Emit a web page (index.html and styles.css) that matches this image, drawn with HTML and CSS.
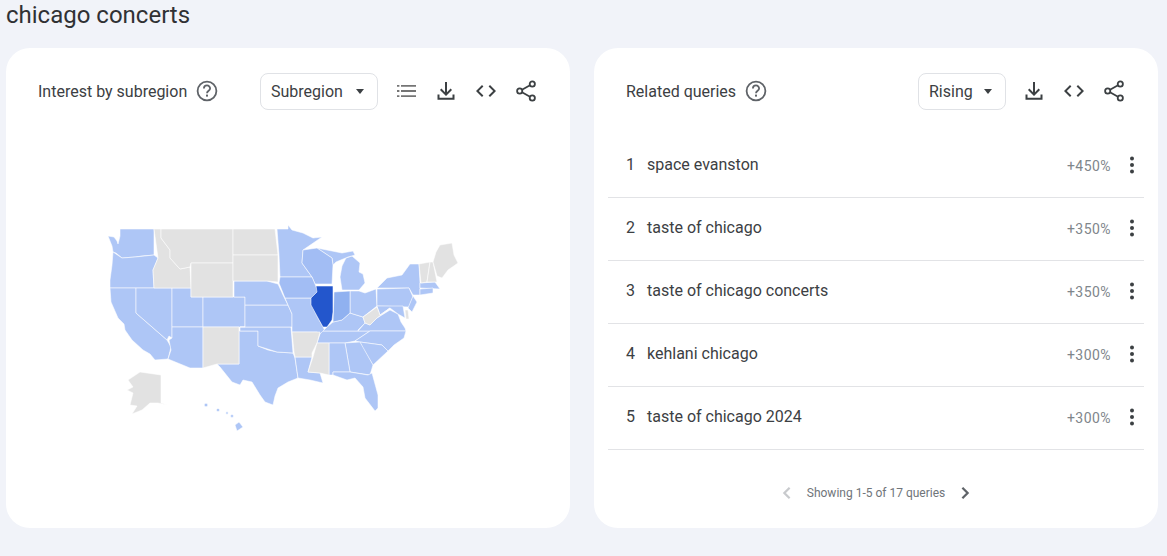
FILE: index.html
```html
<!DOCTYPE html>
<html lang="en">
<head>
  <meta charset="UTF-8">
  <title>chicago concerts</title>
  <link rel="stylesheet" href="styles.css">
</head>
<body>
  <h1 class="page-title">chicago concerts</h1>

  <div class="cards">
    <section class="card">
      <div class="card-header">
        <span class="card-title">Interest by subregion</span>
        <svg class="help" viewBox="0 0 24 24"><use href="#i-help"/></svg>
        <div class="dropdown dropdown-region">Subregion <span class="caret"></span></div>
        <div class="actions">
          <svg class="icon icon-list" viewBox="0 0 24 24"><path d="M3 6h2.4v1.8H3zM7 6h15v1.8H7zM3 11.1h2.4v1.8H3zM7 11.1h15v1.8H7zM3 16.2h2.4V18H3zM7 16.2h15V18H7z"/></svg>
          <svg class="icon" viewBox="0 0 24 24"><use href="#i-download"/></svg>
          <svg class="icon" viewBox="0 0 24 24"><use href="#i-code"/></svg>
          <svg class="icon" viewBox="0 0 24 24"><use href="#i-share"/></svg>
        </div>
      </div>

      <svg class="map" viewBox="100 220 370 220">
        <g class="st">
          <!-- west -->
          <polygon points="120,229 154,229 154,255 142,256 135,257 122,258 116,253 113,252 112,246 108,236 114,237 117,241 118,244 120,236"/>
          <polygon points="113,252 122,258 135,257 154,255 158,258 153,270 154,288 110,288 110,280 112,265"/>
          <polygon points="110,288 136,288 136,313 167,340 171,347 168,359 155,360 150,354 143,350 132,340 125,330 124,324 118,318 111,302"/>
          <polygon points="136,288 172,288 172,338 169,336 167,340 136,313"/>
          <polygon points="172,288 191,288 191,297 203,297 203,327 172,327"/>
          <polygon points="203,297 245,297 245,327 203,327"/>
          <polygon points="172,327 203,327 203,368 190,368 168,359 171,350 169,340 172,338"/>
          <!-- plains -->
          <polygon points="239,331 258,331 258,346 268,350 277,352 293,353 295,358 298,378 288,382 278,388 275,396 273,405 265,402 260,395 252,382 243,380 240,385 232,382 220,367 217,364 239,364"/>
          <polygon points="240,327 291,327 293,353 277,352 258,346 258,331 240,331"/>
          <polygon points="245,305 288,305 292,314 292,327 240,327 245,327"/>
          <polygon points="234,281 267,281 278,284 283,295 288,305 245,305 245,297 234,297"/>
          <polygon points="277,229 288,229 288,225 292,230 303,233 313,238 322,237 303,250 302,263 312,277 280,277 279,255"/>
          <polygon points="285,298 312,298 312,305 318,318 323,327 325,331 320,334 317,332 292,332 292,314 288,305"/>
          <!-- south east -->
          <polygon points="323,331 370,331 355,341 345,343 317,343 320,334"/>
          <polygon points="333,322 342,320 350,313 363,317 365,323 358,330 358,331 323,331 327,327"/>
          <polygon points="358,331 365,323 370,325 377,318 390,310 398,314 401,322 405,328 406,331"/>
          <polygon points="370,331 406,331 404,338 394,345 388,351 382,345 360,342 355,341"/>
          <polygon points="360,342 382,345 388,351 373,365 362,347"/>
          <polygon points="345,343 360,342 373,365 370,375 350,372"/>
          <polygon points="329,343 345,343 350,372 333,372 333,375 329,375"/>
          <polygon points="295,357 312,357 308,372 320,373 323,383 310,380 298,378"/>
          <polygon points="333,372 350,372 368,375 372,373 378,395 378,408 375,411 365,398 363,387 355,378 347,380 333,375"/>
          <!-- north east -->
          <polygon points="350,291 359,291 365,293 376,289 377,306 363,317 350,313"/>
          <polygon points="377,288 387,278 402,275 410,264 419,264 420,283 420,295 413,295 409,288"/>
          <polygon points="377,289 409,288 413,297 409,307 377,306"/>
          <polygon points="413,296 417,302 412,312 408,308"/>
          <polygon points="377,306 403,306 405,318 398,314 390,308 380,315"/>
          <polygon points="420,283 435,282 440,289 420,288"/>
          <polygon points="420,289 433,288 433,293 420,295"/>
          <polygon points="342,290 340,277 342,266 346,258 352,256 360,263 359,272 363,274 365,283 359,290"/>
          <polygon points="317,248 332,251 342,253 353,251 355,255 348,257 336,262 333,265 332,258"/>
          <!-- hawaii -->
          <polygon points="235,425 239,422 243,427 237,431"/>
          <circle cx="206" cy="405" r="1.8"/>
          <circle cx="218" cy="410" r="1.6"/>
          <circle cx="227" cy="413" r="1.2"/>
          <circle cx="232" cy="416" r="1.5"/>
        </g>
        <g class="st st-soft">
          <polygon points="303,250 317,248 332,258 333,265 332,284 315,284 312,277 302,263"/>
          <polygon points="280,277 312,277 315,284 318,291 312,298 285,298 279,283"/>
        </g>
        <g class="st st-mid">
          <polygon points="334,292 350,291 350,313 342,320 333,322"/>
        </g>
        <g class="st st-top">
          <polygon points="316,286 333,286 333,312 332,320 327,327 323,327 318,318 311,305 311,298 317,292"/>
        </g>
        <g class="st st-none">
          <polygon points="154,229 161,229 161,238 170,250 170,258 180,269 190,267 191,288 154,288 153,270 158,258"/>
          <polygon points="161,229 233,229 233,263 191,263 190,267 180,269 170,258 170,250 161,238"/>
          <polygon points="191,263 233,263 233,297 191,297"/>
          <polygon points="233,229 275,229 278,255 233,255"/>
          <polygon points="233,255 278,255 278,282 267,281 233,281"/>
          <polygon points="203,327 239,327 239,364 217,364 210,366 203,368"/>
          <polygon points="292,332 320,332 317,343 312,353 312,357 295,357 294,352"/>
          <polygon points="317,343 329,343 329,375 320,373 308,372 313,357"/>
          <polygon points="363,317 377,307 380,315 390,308 377,318 370,325 365,323"/>
          <polygon points="405,310 408,310 409,319 406,319"/>
          <polygon points="419,264 430,262 427,282 421,283"/>
          <polygon points="430,262 433,262 437,282 427,282"/>
          <polygon points="433,262 436,252 440,245 452,243 454,255 458,263 448,270 442,278 437,276"/>
          <polygon points="140,372 161,375 161,403 167,405 158,403 150,403 142,410 132,414 137,406 130,405 133,393 127,390 133,387 128,380"/>
        </g>
      </svg>
    </section>

    <section class="card">
      <div class="card-header">
        <span class="card-title">Related queries</span>
        <svg class="help" viewBox="0 0 24 24"><use href="#i-help"/></svg>
        <div class="dropdown dropdown-rising">Rising <span class="caret"></span></div>
        <div class="actions">
          <svg class="icon" viewBox="0 0 24 24"><use href="#i-download"/></svg>
          <svg class="icon" viewBox="0 0 24 24"><use href="#i-code"/></svg>
          <svg class="icon" viewBox="0 0 24 24"><use href="#i-share"/></svg>
        </div>
      </div>

      <div class="queries">
        <div class="query">
          <span class="rank">1</span><span class="label">space evanston</span><span class="value">+450%</span>
          <svg class="dots" viewBox="0 0 24 24"><use href="#i-dots"/></svg>
        </div>
        <div class="query">
          <span class="rank">2</span><span class="label">taste of chicago</span><span class="value">+350%</span>
          <svg class="dots" viewBox="0 0 24 24"><use href="#i-dots"/></svg>
        </div>
        <div class="query">
          <span class="rank">3</span><span class="label">taste of chicago concerts</span><span class="value">+350%</span>
          <svg class="dots" viewBox="0 0 24 24"><use href="#i-dots"/></svg>
        </div>
        <div class="query">
          <span class="rank">4</span><span class="label">kehlani chicago</span><span class="value">+300%</span>
          <svg class="dots" viewBox="0 0 24 24"><use href="#i-dots"/></svg>
        </div>
        <div class="query">
          <span class="rank">5</span><span class="label">taste of chicago 2024</span><span class="value">+300%</span>
          <svg class="dots" viewBox="0 0 24 24"><use href="#i-dots"/></svg>
        </div>
      </div>

      <div class="pager">
        <svg class="chev chev-off" viewBox="0 0 24 24"><path d="M15.5 5 8.5 12l7 7"/></svg>
        <span>Showing 1-5 of 17 queries</span>
        <svg class="chev" viewBox="0 0 24 24"><path d="M8.5 5l7 7-7 7"/></svg>
      </div>
    </section>
  </div>

  <svg class="defs" width="0" height="0">
    <defs>
      <g id="i-help">
        <circle cx="12" cy="12" r="9.4" fill="none" stroke="currentColor" stroke-width="1.8"/>
        <path d="M8.9 9.5a3.1 3.1 0 0 1 6.2 0c0 2.2-3.1 2.4-3.1 4.7" fill="none" stroke="currentColor" stroke-width="1.8"/>
        <rect x="11" y="15.6" width="2" height="2" fill="currentColor"/>
      </g>
      <path id="i-download" d="M11 3h2v10.2l3.6-3.6L18 11l-6 6-6-6 1.4-1.4 3.6 3.6zM3.5 15.5h2v3.2h13v-3.2h2v5.2h-17z"/>
      <path id="i-code" d="M9.4 16.6 4.8 12l4.6-4.6L8 6l-6 6 6 6zm5.2 0 4.6-4.6-4.6-4.6L16 6l6 6-6 6z"/>
      <g id="i-share">
        <circle cx="18.3" cy="5" r="2.6" fill="none" stroke="currentColor" stroke-width="1.8"/>
        <circle cx="5.7" cy="12" r="2.6" fill="none" stroke="currentColor" stroke-width="1.8"/>
        <circle cx="18.3" cy="19" r="2.6" fill="none" stroke="currentColor" stroke-width="1.8"/>
        <path d="M8 10.7l8-4.4M8 13.3l8 4.4" fill="none" stroke="currentColor" stroke-width="1.8"/>
      </g>
      <g id="i-dots">
        <circle cx="12" cy="5.5" r="2"/>
        <circle cx="12" cy="12" r="2"/>
        <circle cx="12" cy="18.5" r="2"/>
      </g>
    </defs>
  </svg>
</body>
</html>
```

FILE: styles.css
```css
* {
  box-sizing: border-box;
}

body {
  margin: 0;
  background: #f1f3f9;
  color: #202124;
  font-family: 'Roboto', 'Liberation Sans', sans-serif;
  height: 556px;
  overflow: hidden;
}

.page-title {
  margin: 0;
  padding-left: 6px;
  height: 48px;
  font-size: 24px;
  line-height: 31px;
  font-weight: 400;
  color: #303134;
}

.cards {
  display: flex;
  gap: 24px;
  padding: 0 9px 0 6px;
}

.card {
  flex: 1;
  height: 480px;
  background: #fff;
  border-radius: 24px;
  padding: 25px 32px 0;
}

.card-header {
  display: flex;
  align-items: center;
  height: 37px;
}

.card-title {
  font-size: 16px;
  color: #3c4043;
  margin-bottom: 1px;
}

.help {
  width: 24px;
  height: 24px;
  margin-left: 8px;
  margin-bottom: 1px;
  color: #5f6368;
}

.dropdown {
  display: flex;
  align-items: center;
  justify-content: space-between;
  height: 37px;
  margin-left: auto;
  padding: 0 13px 0 10px;
  border: 1px solid #e0e2e6;
  border-radius: 8px;
  font-size: 16px;
  color: #3c4043;
}

.dropdown-region {
  width: 118px;
}

.dropdown-rising {
  width: 88px;
}

.caret {
  width: 0;
  height: 0;
  border-left: 4.5px solid transparent;
  border-right: 4.5px solid transparent;
  border-top: 5px solid #3c4043;
}

.actions {
  display: flex;
  gap: 16px;
  margin-left: 16px;
  margin-bottom: 1px;
}

.icon {
  display: block;
  width: 24px;
  height: 24px;
  fill: #3c4043;
  color: #3c4043;
}

.icon-list {
  fill: #757575;
}

.map {
  display: block;
  width: 370px;
  height: 220px;
  margin: 110px 0 0 62px;
}

.st {
  fill: #aec6f6;
  stroke: #fff;
  stroke-width: 0.55;
  stroke-linejoin: round;
}

.st-soft {
  fill: #a2bdf4;
}

.st-mid {
  fill: #90b1f0;
}

.st-top {
  fill: #2356cc;
}

.st-none {
  fill: #e2e2e2;
}

.queries {
  margin: 25px -18px 0;
}

.query {
  display: flex;
  align-items: center;
  height: 63px;
  padding: 0 0 4px 18px;
  border-bottom: 1px solid #e2e3e6;
  font-size: 16px;
  color: #3c4043;
}

.rank {
  width: 21px;
}

.label {
  flex: 1;
}

.value {
  font-size: 14px;
  letter-spacing: 0.45px;
  color: #80868b;
  padding-top: 4px;
}

.dots {
  width: 24px;
  height: 24px;
  margin: 2px 0 0 9px;
  fill: #3c4043;
}

.pager {
  display: flex;
  align-items: center;
  justify-content: center;
  height: 85px;
  font-size: 12px;
  color: #70757a;
}

.pager span {
  margin: 0 11px;
}

.chev {
  width: 18px;
  height: 18px;
  fill: none;
  stroke: #5f6368;
  stroke-width: 3;
}

.chev-off {
  stroke: #c8cacd;
}

.defs {
  position: absolute;
}
```
